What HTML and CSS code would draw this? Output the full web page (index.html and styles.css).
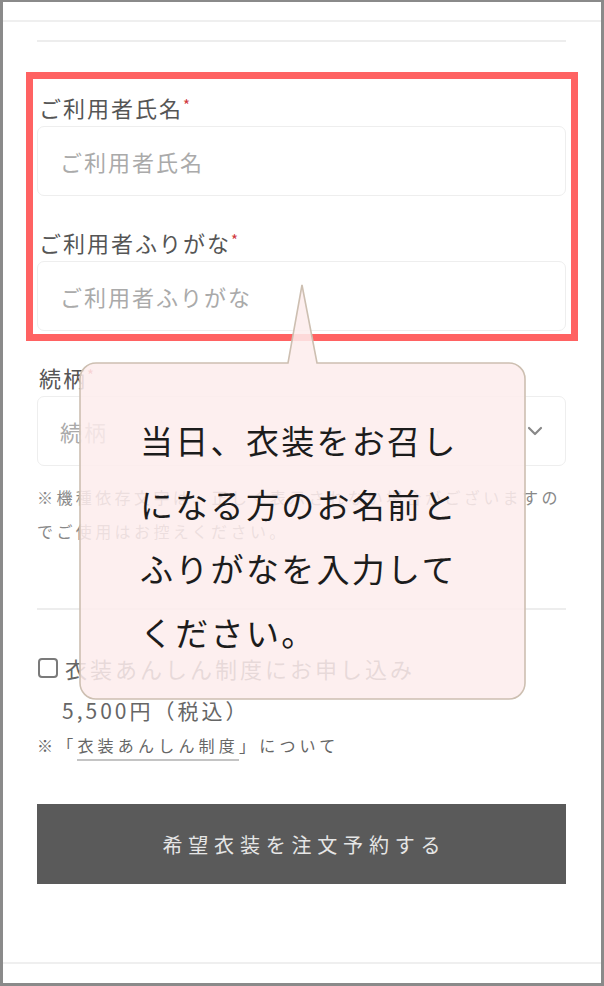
FILE: index.html
```html
<!DOCTYPE html>
<html lang="ja">
<head>
<meta charset="utf-8">
<title>ご利用者情報</title>
<link rel="stylesheet" href="styles.css">
</head>
<body>
<div class="frame">
  <div class="topbar"></div>
  <div class="content">
    <div class="rule"></div>
    <div class="field first">
      <div class="label">ご利用者氏名<span class="req">*</span></div>
      <input class="input" type="text" placeholder="ご利用者氏名">
    </div>
    <div class="field">
      <div class="label">ご利用者ふりがな<span class="req">*</span></div>
      <input class="input" type="text" placeholder="ご利用者ふりがな">
    </div>
    <div class="field">
      <div class="label">続柄<span class="req">*</span></div>
      <div class="input select">
        <span class="ph">続柄</span>
        <svg class="chev" width="16" height="10" viewBox="0 0 16 10"><polyline points="2,2 8,8 14,2" fill="none" stroke="#888" stroke-width="2.2" stroke-linecap="round" stroke-linejoin="round"/></svg>
      </div>
    </div>
    <p class="note">※機種依存文字は、正しく表示されない場合がございますの<br>でご使用はお控えください。</p>
    <div class="rule divider"></div>
    <label class="check-row"><span class="checkbox"></span><span class="check-text">衣装あんしん制度にお申し込み</span></label>
    <div class="price">5,500円（税込）</div>
    <div class="link-note">※「<span class="link">衣装あんしん制度</span>」について</div>
    <div class="button">希望衣装を注文予約する</div>
  </div>
  <div class="footer"></div>

  <div class="highlight"></div>
  <div class="callout">
    <svg class="bubble" width="447" height="418" viewBox="0 0 447 418">
      <path d="M17 80 H209 L223 2 L238 80 H430 A16 16 0 0 1 446 96 V400 A16 16 0 0 1 430 416 H17 A16 16 0 0 1 1 400 V96 A16 16 0 0 1 17 80 Z" fill="rgba(253,236,236,0.86)" stroke="#cdbfb1" stroke-width="1.6"/>
    </svg>
    <div class="callout-text">当日、衣装をお召し<br>になる方のお名前と<br>ふりがなを入力して<br>ください。</div>
  </div>
</div>
</body>
</html>
```
FILE: styles.css
```css
html, body {
  margin: 0;
  padding: 0;
  background: #fff;
}
body {
  font-family: "Noto Sans CJK JP", "Noto Sans", sans-serif;
  overflow: hidden;
}
.frame {
  position: relative;
  width: 604px;
  height: 986px;
  box-sizing: border-box;
  border: 3px solid #8a8a8a;
  border-top-width: 2px;
  display: flex;
  flex-direction: column;
  background: #fff;
}
.topbar {
  height: 18px;
  border-bottom: 2px solid #efefef;
  flex: none;
}
.content {
  padding: 0 35px 0 34px;
  display: flex;
  flex-direction: column;
}
.rule {
  height: 2px;
  background: #ededed;
  margin-top: 18px;
}
.field {
  margin-top: 31px;
  display: flex;
  flex-direction: column;
}
.field.first {
  margin-top: 50px;
}
.label {
  font-size: 22px;
  line-height: 30px;
  height: 30px;
  letter-spacing: 2px;
  color: #555;
  padding-left: 2px;
}
.req {
  color: #d0383c;
  font-size: 15px;
  line-height: 0;
  vertical-align: 6px;
  letter-spacing: 0;
}
.input {
  margin-top: 4px;
  height: 70px;
  box-sizing: border-box;
  border: 1.5px solid #eeeeee;
  border-radius: 7px;
  padding: 0 22px;
  font-family: inherit;
  font-size: 22px;
  letter-spacing: 2px;
  color: #555;
  background: #fff;
  outline: none;
  width: 100%;
}
.input::placeholder {
  color: #aaa;
}
.select {
  display: flex;
  align-items: center;
  justify-content: space-between;
}
.select .ph {
  color: #aaa;
}
.chev {
  margin-right: 0;
}
.note {
  margin: 14px 0 0;
  font-size: 16px;
  line-height: 34px;
  letter-spacing: 3.4px;
  color: #888;
}
.divider {
  margin-top: 60px;
}
.check-row {
  margin-top: 43px;
  display: flex;
  align-items: center;
  gap: 7px;
  height: 30px;
  padding-left: 1px;
}
.checkbox {
  width: 20px;
  height: 20px;
  box-sizing: border-box;
  border: 2px solid #7a7a7a;
  border-radius: 4px;
  flex: none;
}
.check-text {
  font-size: 22px;
  letter-spacing: 3px;
  color: #666;
  line-height: 30px;
}
.price {
  margin-top: 12px;
  padding-left: 25px;
  font-size: 21px;
  line-height: 30px;
  letter-spacing: 3px;
  color: #666;
}
.link-note {
  margin-top: 5px;
  font-size: 16px;
  line-height: 30px;
  letter-spacing: 4.2px;
  color: #666;
}
.link {
  border-bottom: 2px solid #c4c4c4;
  padding-bottom: 2px;
}
.button {
  margin-top: 44px;
  height: 80px;
  background: #5a5a5a;
  color: #e6e6e6;
  font-size: 20px;
  letter-spacing: 5.8px;
  padding-left: 5.8px;
  display: flex;
  align-items: center;
  justify-content: center;
}
.footer {
  margin-top: auto;
  height: 19px;
  border-top: 2px solid #efefef;
  flex: none;
}
.highlight {
  position: absolute;
  left: 23px;
  top: 70px;
  width: 552px;
  height: 269px;
  box-sizing: border-box;
  border: 7px solid #ff6262;
}
.callout {
  position: absolute;
  left: 76px;
  top: 281px;
  width: 447px;
  height: 418px;
}
.bubble {
  position: absolute;
  left: 0;
  top: 0;
}
.callout-text {
  position: absolute;
  left: 61px;
  top: 125px;
  font-size: 33px;
  line-height: 64px;
  letter-spacing: 2.3px;
  color: #1c1c1c;
  white-space: nowrap;
}
```
